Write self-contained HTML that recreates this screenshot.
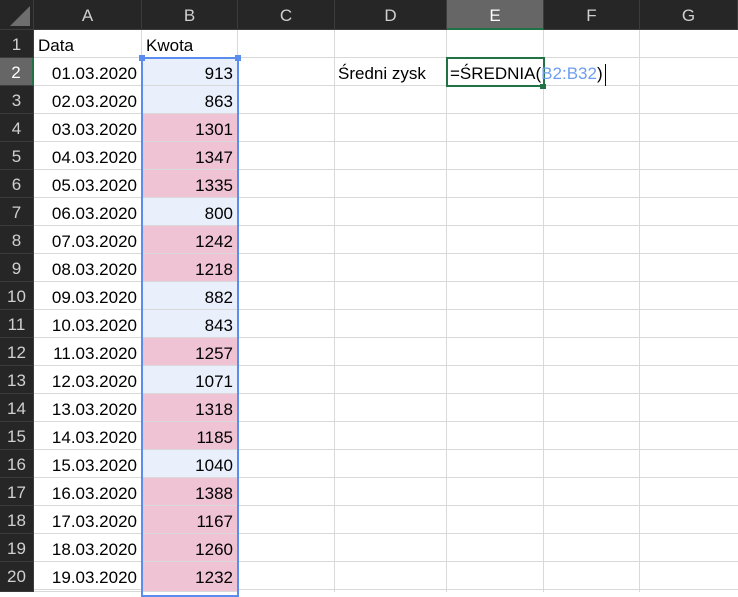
<!DOCTYPE html>
<html><head><meta charset="utf-8"><style>
*{margin:0;padding:0;box-sizing:border-box}
body{width:738px;height:592px;overflow:hidden;background:#fff;position:relative;font-family:"Liberation Sans",sans-serif;font-size:17px;color:#000}
.h{position:absolute;background:#262626;color:#d0d0d0;text-align:center;font-size:17px;border-right:1px solid #3c3c3c;border-bottom:1px solid #3c3c3c}
.c{position:absolute;height:28px;line-height:32px;border-right:1px solid #d9d9d9;border-bottom:1px solid #d9d9d9;white-space:nowrap;padding:0 4px}
.r{text-align:right}
.p{background:#efc3d3}.b{background:#e9f0fc}
</style></head><body>
<div class="h" style="left:0;top:0;width:34px;height:30px"><div style="position:absolute;right:3px;bottom:3px;width:0;height:0;border-left:20px solid transparent;border-bottom:20px solid #6e6e6e"></div></div>
<div class="h" style="left:34px;top:0;width:108px;height:30px;line-height:32px">A</div>
<div class="h" style="left:142px;top:0;width:96px;height:30px;line-height:32px">B</div>
<div class="h" style="left:238px;top:0;width:97px;height:30px;line-height:32px">C</div>
<div class="h" style="left:335px;top:0;width:112px;height:30px;line-height:32px">D</div>
<div class="h" style="left:447px;top:0;width:97px;height:30px;line-height:32px;background:#666;color:#fff;border-bottom:2px solid #217346">E</div>
<div class="h" style="left:544px;top:0;width:96px;height:30px;line-height:32px">F</div>
<div class="h" style="left:640px;top:0;width:98px;height:30px;line-height:32px">G</div>
<div class="h" style="left:0;top:30px;width:34px;height:28px;line-height:30px">1</div>
<div class="h" style="left:0;top:58px;width:34px;height:28px;line-height:30px;background:#666;color:#fff;border-right:2px solid #217346">2</div>
<div class="h" style="left:0;top:86px;width:34px;height:28px;line-height:30px">3</div>
<div class="h" style="left:0;top:114px;width:34px;height:28px;line-height:30px">4</div>
<div class="h" style="left:0;top:142px;width:34px;height:28px;line-height:30px">5</div>
<div class="h" style="left:0;top:170px;width:34px;height:28px;line-height:30px">6</div>
<div class="h" style="left:0;top:198px;width:34px;height:28px;line-height:30px">7</div>
<div class="h" style="left:0;top:226px;width:34px;height:28px;line-height:30px">8</div>
<div class="h" style="left:0;top:254px;width:34px;height:28px;line-height:30px">9</div>
<div class="h" style="left:0;top:282px;width:34px;height:28px;line-height:30px">10</div>
<div class="h" style="left:0;top:310px;width:34px;height:28px;line-height:30px">11</div>
<div class="h" style="left:0;top:338px;width:34px;height:28px;line-height:30px">12</div>
<div class="h" style="left:0;top:366px;width:34px;height:28px;line-height:30px">13</div>
<div class="h" style="left:0;top:394px;width:34px;height:28px;line-height:30px">14</div>
<div class="h" style="left:0;top:422px;width:34px;height:28px;line-height:30px">15</div>
<div class="h" style="left:0;top:450px;width:34px;height:28px;line-height:30px">16</div>
<div class="h" style="left:0;top:478px;width:34px;height:28px;line-height:30px">17</div>
<div class="h" style="left:0;top:506px;width:34px;height:28px;line-height:30px">18</div>
<div class="h" style="left:0;top:534px;width:34px;height:28px;line-height:30px">19</div>
<div class="h" style="left:0;top:562px;width:34px;height:30px;line-height:30px">20</div>
<svg style="position:absolute;left:34px;top:30px" width="704" height="562">
<g stroke="#d9d9d9" stroke-width="1">
<path d="M0 27.5H704M0 55.5H704M0 83.5H704M0 111.5H704M0 139.5H704M0 167.5H704M0 195.5H704M0 223.5H704M0 251.5H704M0 279.5H704M0 307.5H704M0 335.5H704M0 363.5H704M0 391.5H704M0 419.5H704M0 447.5H704M0 475.5H704M0 503.5H704M0 531.5H704M0 559.5H704"/>
<path d="M107.5 0V562M203.5 0V562M300.5 0V562M412.5 0V562M509.5 0V562M605.5 0V562"/>
</g></svg>
<div class="c" style="left:34px;top:30px;width:108px">Data</div>
<div class="c" style="left:142px;top:30px;width:96px">Kwota</div>
<div class="c r" style="left:34px;top:58px;width:108px">01.03.2020</div><div class="c r b" style="left:142px;top:58px;width:96px">913</div>
<div class="c r" style="left:34px;top:86px;width:108px">02.03.2020</div><div class="c r b" style="left:142px;top:86px;width:96px">863</div>
<div class="c r" style="left:34px;top:114px;width:108px">03.03.2020</div><div class="c r p" style="left:142px;top:114px;width:96px">1301</div>
<div class="c r" style="left:34px;top:142px;width:108px">04.03.2020</div><div class="c r p" style="left:142px;top:142px;width:96px">1347</div>
<div class="c r" style="left:34px;top:170px;width:108px">05.03.2020</div><div class="c r p" style="left:142px;top:170px;width:96px">1335</div>
<div class="c r" style="left:34px;top:198px;width:108px">06.03.2020</div><div class="c r b" style="left:142px;top:198px;width:96px">800</div>
<div class="c r" style="left:34px;top:226px;width:108px">07.03.2020</div><div class="c r p" style="left:142px;top:226px;width:96px">1242</div>
<div class="c r" style="left:34px;top:254px;width:108px">08.03.2020</div><div class="c r p" style="left:142px;top:254px;width:96px">1218</div>
<div class="c r" style="left:34px;top:282px;width:108px">09.03.2020</div><div class="c r b" style="left:142px;top:282px;width:96px">882</div>
<div class="c r" style="left:34px;top:310px;width:108px">10.03.2020</div><div class="c r b" style="left:142px;top:310px;width:96px">843</div>
<div class="c r" style="left:34px;top:338px;width:108px">11.03.2020</div><div class="c r p" style="left:142px;top:338px;width:96px">1257</div>
<div class="c r" style="left:34px;top:366px;width:108px">12.03.2020</div><div class="c r b" style="left:142px;top:366px;width:96px">1071</div>
<div class="c r" style="left:34px;top:394px;width:108px">13.03.2020</div><div class="c r p" style="left:142px;top:394px;width:96px">1318</div>
<div class="c r" style="left:34px;top:422px;width:108px">14.03.2020</div><div class="c r p" style="left:142px;top:422px;width:96px">1185</div>
<div class="c r" style="left:34px;top:450px;width:108px">15.03.2020</div><div class="c r b" style="left:142px;top:450px;width:96px">1040</div>
<div class="c r" style="left:34px;top:478px;width:108px">16.03.2020</div><div class="c r p" style="left:142px;top:478px;width:96px">1388</div>
<div class="c r" style="left:34px;top:506px;width:108px">17.03.2020</div><div class="c r p" style="left:142px;top:506px;width:96px">1167</div>
<div class="c r" style="left:34px;top:534px;width:108px">18.03.2020</div><div class="c r p" style="left:142px;top:534px;width:96px">1260</div>
<div class="c r" style="left:34px;top:562px;width:108px;height:30px">19.03.2020</div><div class="c r p" style="left:142px;top:562px;width:96px;height:30px">1232</div>
<div style="position:absolute;left:141px;top:57px;width:98px;height:540px;border:2px solid #5b8def"></div>
<div style="position:absolute;left:139px;top:55px;width:6px;height:6px;background:#5b8def"></div>
<div style="position:absolute;left:235px;top:55px;width:6px;height:6px;background:#5b8def"></div>
<div style="position:absolute;left:338px;top:58px;height:28px;line-height:32px;white-space:nowrap">Średni zysk</div>
<div style="position:absolute;left:446px;top:57px;width:99px;height:30px;border:2px solid #217346;background:#fff"></div>
<div style="position:absolute;left:540px;top:84px;width:6px;height:5px;background:#217346"></div>
<div style="position:absolute;left:450px;top:58px;height:28px;line-height:32px;white-space:nowrap">=ŚREDNIA(<span style="color:#6d9ef0">B2:B32</span>)<span style="display:inline-block;width:1px;height:22px;background:#000;vertical-align:middle;margin-left:2px"></span></div>
</body></html>
